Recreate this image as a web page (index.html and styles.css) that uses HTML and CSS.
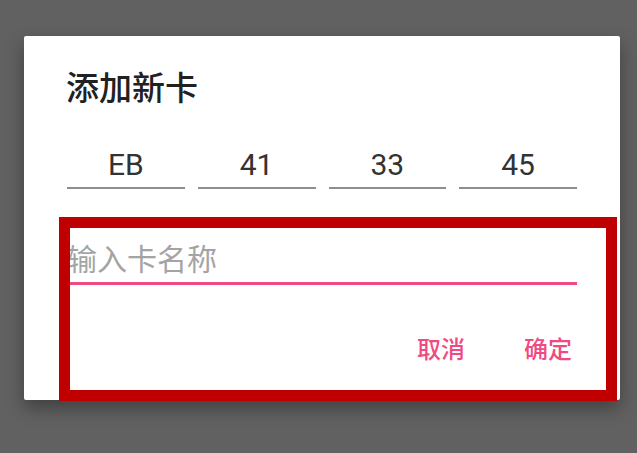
FILE: index.html
```html
<!DOCTYPE html>
<html lang="zh">
<head>
<meta charset="utf-8">
<link rel="stylesheet" href="styles.css">
</head>
<body>
<div class="dialog">
  <div class="title">添加新卡</div>
  <div class="fields">
    <div class="field">EB</div>
    <div class="field">41</div>
    <div class="field">33</div>
    <div class="field">45</div>
  </div>
  <div class="name-input"><span class="placeholder">输入卡名称</span></div>
  <div class="actions">
    <span class="btn">取消</span>
    <span class="btn">确定</span>
  </div>
  <div class="highlight"></div>
</div>
</body>
</html>
```
FILE: styles.css
```css
html, body {
  margin: 0;
  padding: 0;
}
body {
  background: #616161;
  width: 637px;
  height: 453px;
  overflow: hidden;
  font-family: "Noto Sans CJK SC", "Noto Sans", sans-serif;
}
.dialog {
  position: relative;
  margin: 36px 0 0 24px;
  width: 596px;
  box-sizing: border-box;
  background: #ffffff;
  border-radius: 2px;
  padding: 30px 43px 37px 42px;
  box-shadow: 0 8px 18px rgba(0, 0, 0, 0.35);
}
.title {
  font-size: 33px;
  line-height: 40px;
  font-weight: 500;
  color: #212121;
}
.fields {
  display: flex;
  gap: 13px;
  margin-top: 41px;
  padding-left: 1px;
}
.field {
  width: 118px;
  font-family: Roboto, "Noto Sans CJK SC", sans-serif;
  font-size: 30px;
  line-height: 36px;
  color: #333333;
  text-align: center;
  padding-bottom: 4px;
  border-bottom: 2px solid #8e8e8e;
}
.name-input {
  margin-top: 48px;
  margin-left: 1px;
  font-size: 30px;
  line-height: 40px;
  padding-bottom: 5px;
  border-bottom: 3px solid #f04a82;
}
.placeholder {
  color: #a4a4a4;
}
.actions {
  display: flex;
  justify-content: flex-end;
  gap: 59px;
  margin-top: 48px;
  padding-right: 5px;
}
.btn {
  font-size: 24px;
  line-height: 30px;
  font-weight: 500;
  color: #f04a82;
}
.highlight {
  position: absolute;
  left: 35px;
  top: 181px;
  width: 558px;
  height: 184px;
  box-sizing: border-box;
  border: 11px solid #c00000;
}
```
